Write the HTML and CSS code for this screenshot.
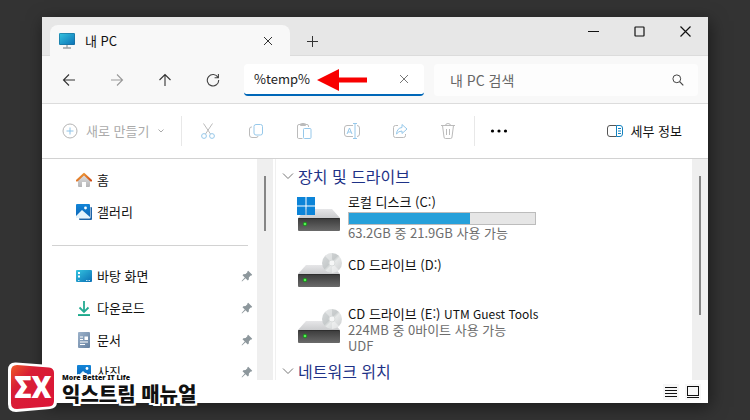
FILE: index.html
```html
<!DOCTYPE html>
<html lang="ko">
<head>
  <meta charset="UTF-8">
  <meta name="viewport" content="width=device-width, initial-scale=1.0">
  <title>내 PC</title>
  <link rel="stylesheet" href="styles.css">
</head>
<body>
<!-- shared icons -->
<svg class="defs" width="0" height="0" aria-hidden="true">
  <defs>
    <linearGradient id="screen" x1="0" y1="0" x2="1" y2="1"><stop offset="0" stop-color="#35c5e0"/><stop offset="1" stop-color="#0a6fb5"/></linearGradient>
    <linearGradient id="driveTop" x1="0" y1="0" x2="0" y2="1"><stop offset="0" stop-color="#e6e6e8"/><stop offset="1" stop-color="#cbccce"/></linearGradient>
    <linearGradient id="driveFront" x1="0" y1="0" x2="0" y2="1"><stop offset="0" stop-color="#3a3a3a"/><stop offset="1" stop-color="#6a6a6a"/></linearGradient>
    <linearGradient id="wall" x1="0" y1="0" x2="0" y2="1"><stop offset="0" stop-color="#e0e0e0"/><stop offset="1" stop-color="#b4b4b6"/></linearGradient>
    <linearGradient id="roof" x1="0" y1="0" x2="1" y2="1"><stop offset="0" stop-color="#f2a33a"/><stop offset="1" stop-color="#d0501a"/></linearGradient>
    <linearGradient id="blue" x1="0" y1="0" x2="0" y2="1"><stop offset="0" stop-color="#1285d8"/><stop offset="1" stop-color="#0c63b4"/></linearGradient>
    <linearGradient id="disc" x1="0" y1="0" x2="1" y2="1"><stop offset="0" stop-color="#d9dcdd"/><stop offset=".45" stop-color="#c6cacb"/><stop offset=".55" stop-color="#e6e8e8"/><stop offset="1" stop-color="#c9cccd"/></linearGradient>
    <linearGradient id="doc" x1="0" y1="0" x2="1" y2="1"><stop offset="0" stop-color="#9db3cb"/><stop offset="1" stop-color="#647f9f"/></linearGradient>
    <linearGradient id="down" x1="0" y1="0" x2="0" y2="1"><stop offset="0" stop-color="#3cc09a"/><stop offset="1" stop-color="#149a88"/></linearGradient>
    <linearGradient id="badge" x1="0" y1="0" x2="1" y2="1"><stop offset="0" stop-color="#f05a28"/><stop offset=".3" stop-color="#d81f35"/><stop offset="1" stop-color="#dc1438"/></linearGradient>
    <symbol id="pin" viewBox="0 0 12 12">
      <path d="M7.2.8 11.2 4.8 10.2 5.8 9.7 5.6 7.9 7.4 7.8 9.6 6.8 10.5 4.5 8.2 1 11.4.6 11 3.8 7.5 1.5 5.2 2.4 4.3 4.6 4.1 6.4 2.3 6.2 1.8z" fill="#8d979c"/>
    </symbol>
    <symbol id="drive" viewBox="0 0 46 36">
      <path d="M9 12H35L43 21H1z" fill="url(#driveTop)"/>
      <rect x="1" y="21" width="42" height="13" rx="1" fill="url(#driveFront)"/>
      <path d="M1.500 21.500H42.500" stroke="#2e2e2e"/>
      <circle cx="8" cy="27" r="2.200" fill="#1f8a1f"/>
      <circle cx="8" cy="27" r="1.300" fill="#52f052"/>
    </symbol>
    <symbol id="cd" viewBox="0 0 46 36">
      <use href="#drive" width="46" height="36"/>
      <circle cx="35" cy="10" r="10" fill="url(#disc)"/>
      <path d="M35 10 28 3A10 10 0 0 1 35 0zM35 10 42 17A10 10 0 0 1 35 20z" fill="#fff" opacity=".4"/>
      <circle cx="35" cy="10" r="3" fill="#f6f7f7" stroke="#d9dcdc"/>
    </symbol>
  </defs>
</svg>

<div class="window">
  <header class="titlebar">
    <div class="tab">
      <svg width="18" height="18" viewBox="0 0 18 18"><path d="M9 12V16M5 16H13" stroke="#9aa0a4" stroke-width="1.300"/><rect x="1" y="1" width="16" height="12" rx="1" fill="url(#screen)"/><rect x="1.500" y="1.500" width="15" height="11" rx="1" fill="none" stroke="#1c6d96" stroke-opacity=".6"/></svg>
      <span class="tab-title">내 PC</span>
      <button class="icon-button" aria-label="탭 닫기"><svg width="10" height="10"><path d="M1 1 9 9M9 1 1 9" stroke="#333"/></svg></button>
    </div>
    <button class="icon-button new-tab" aria-label="새 탭"><svg width="11" height="11"><path d="M5.500 0V11M0 5.500H11" stroke="#333"/></svg></button>
    <div class="caption-buttons">
      <button class="caption" aria-label="최소화"><svg width="11" height="11"><path d="M0 5.500H11" stroke="#111"/></svg></button>
      <button class="caption" aria-label="최대화"><svg width="11" height="11"><rect x="1" y="1" width="9" height="9" rx=".5" fill="none" stroke="#111" stroke-width="1.200"/></svg></button>
      <button class="caption" aria-label="닫기"><svg width="11" height="11"><path d="M.5.5 10.500 10.500M10.500.5.5 10.500" stroke="#111" stroke-width="1.200"/></svg></button>
    </div>
  </header>

  <nav class="navbar">
    <button class="nav-button" aria-label="뒤로"><svg width="14" height="14"><path d="M13 7H1.500M7 1.500 1.500 7 7 12.500" fill="none" stroke="#333" stroke-width="1.100"/></svg></button>
    <button class="nav-button" aria-label="앞으로" disabled><svg width="14" height="14"><path d="M1 7H12.500M7 1.500 12.500 7 7 12.500" fill="none" stroke="#999" stroke-width="1.100"/></svg></button>
    <button class="nav-button" aria-label="위로"><svg width="14" height="14"><path d="M7 13V1.500M1.500 7 7 1.500 12.500 7" fill="none" stroke="#333" stroke-width="1.100"/></svg></button>
    <button class="nav-button" aria-label="새로 고침"><svg width="14" height="14"><path d="M12 4.500A5.700 5.700 0 1 0 12.700 7M12.400 1V4.800H8.600" fill="none" stroke="#444" stroke-width="1.100"/></svg></button>
    <div class="address">
      <input class="field latin" type="text" value="%temp%" aria-label="주소">
      <button class="icon-button" aria-label="지우기"><svg width="10" height="10"><path d="M1 1 9 9M9 1 1 9" stroke="#777"/></svg></button>
      <svg class="arrow" width="50" height="22"><path d="M0 11 22 0V8.500H50V13.500H22V22z" fill="#f80000"/></svg>
    </div>
    <div class="search">
      <input class="field" type="text" placeholder="내 PC 검색" aria-label="내 PC 검색">
      <button class="icon-button" aria-label="검색"><svg width="12" height="12"><circle cx="4.800" cy="4.800" r="3.900" fill="none" stroke="#444"/><path d="M7.600 7.600 11.300 11.300" stroke="#444" stroke-width="1.200"/></svg></button>
    </div>
  </nav>

  <div class="toolbar">
    <button class="new-button" disabled>
      <svg width="16" height="16"><circle cx="8" cy="8" r="7" fill="none" stroke="#b5b5b5"/><path d="M8 4.500V11.500M4.500 8H11.500" stroke="#8fc4e8"/></svg>
      <span>새로 만들기</span>
      <svg width="8" height="6"><path d="M1.500 1.500 4 4 6.500 1.500" fill="none" stroke="#aaa"/></svg>
    </button>
    <div class="tools">
      <button class="tool" aria-label="잘라내기" disabled><svg width="16" height="16" fill="none"><path d="M3.500.5 10.500 11M12.500.5 5.500 11" stroke="#bbb"/><circle cx="4" cy="13" r="2.400" stroke="#96c8ea"/><circle cx="12" cy="13" r="2.400" stroke="#96c8ea"/></svg></button>
      <button class="tool" aria-label="복사" disabled><svg width="16" height="16" fill="none"><path d="M4 4H3.500Q1.500 4 1.500 6V12Q1.500 14.500 4 14.500H8Q10 14.500 10 13" stroke="#bbb"/><rect x="6" y="1.500" width="8.500" height="10.500" rx="2" stroke="#96c8ea"/></svg></button>
      <button class="tool" aria-label="붙여넣기" disabled><svg width="16" height="16" fill="none"><path d="M6.500 15.500H2.500Q1.500 15.500 1.500 14V3Q1.500 1.500 3 1.500H11Q12.500 1.500 12.500 3V4M4.500 1Q4.500.5 5.500.5H8.500Q9.500.5 9.500 1V2.500H4.500z" stroke="#bbb"/><rect x="7.500" y="5.500" width="7.500" height="10" rx="1" stroke="#96c8ea"/></svg></button>
      <button class="tool" aria-label="이름 바꾸기" disabled><svg width="16" height="16" fill="none"><path d="M9 13.500H3Q.5 13.500.5 11V5Q.5 2.500 3 2.500H9M13 2.500Q15.500 2.500 15.500 5V11Q15.500 13.500 13 13.500" stroke="#bbb"/><path d="M3 11 5.500 5 8 11M4 9H7M11 .5V15.500M9 .5H13M9 15.500H13" stroke="#96c8ea"/></svg></button>
      <button class="tool" aria-label="공유" disabled><svg width="16" height="16" fill="none"><path d="M6 2.500H3.500Q1.500 2.500 1.500 4.500V12.500Q1.500 14.500 3.500 14.500H11.500Q13.500 14.500 13.500 12.500V11" stroke="#bbb"/><path d="M10 1.500 15 6 10 10.500V8Q6.500 8 4.500 11 5 5 10 4.500z" stroke="#96c8ea" stroke-linejoin="round"/></svg></button>
      <button class="tool" aria-label="삭제" disabled><svg width="16" height="16" fill="none" stroke="#bbb"><path d="M1 2.500H15M5.500 2.500Q5.500.5 8 .5T10.500 2.500M2.500 2.500 4 14Q4 15.500 5.500 15.500H10.500Q12 15.500 12 14L13.500 2.500M6.500 6V12M9.500 6V12"/></svg></button>
    </div>
    <button class="more" aria-label="더 보기"><svg width="18" height="4"><circle cx="2.500" cy="2" r="1.600"/><circle cx="9" cy="2" r="1.600"/><circle cx="15.500" cy="2" r="1.600"/></svg></button>
    <button class="details">
      <svg width="16" height="12" fill="none"><path d="M9.500.5H3Q.5.5.5 3V9Q.5 11.500 3 11.500H9.500" stroke="#555"/><path d="M9.500.5H13Q15.500.5 15.500 3V9Q15.500 11.500 13 11.500H9.500zM11 3.500H14M11 6H14M11 8.500H14" stroke="#1482bf"/></svg>
      <span>세부 정보</span>
    </button>
  </div>

  <div class="content">
    <aside class="sidebar">
      <ul class="places">
        <li><svg width="16" height="16"><path d="M2 7.500 8 2.500 14 7.500V14Q14 15 13 15H10V10H6V15H3Q2 15 2 14z" fill="url(#wall)"/><path d="M1 8.500 8 2 15 8.500" fill="none" stroke="url(#roof)" stroke-width="2.200" stroke-linecap="round" stroke-linejoin="round"/></svg><span>홈</span></li>
        <li><svg width="16" height="16"><rect x="3" y="3" width="13" height="13" rx="1" fill="#1c62a6"/><rect x="0" y="0" width="14.500" height="14.500" rx="1" fill="#fff"/><rect x="0" y="0" width="14" height="14" rx="1" fill="url(#blue)"/><path d="M0 12 6 6 14 13V14H0z" fill="#e4f3fc"/><circle cx="9.500" cy="4" r="1.400" fill="#fff"/></svg><span>갤러리</span></li>
      </ul>
      <hr class="divider">
      <ul class="places">
        <li><svg width="16" height="16"><rect y="2" width="16" height="12" rx="1" fill="url(#screen)"/><path d="M2 4H4V6H2zM2 7.500H4V9.500H2z" fill="#fff"/><path d="M2 12.500H4M10 12.500H14" stroke="#bfe6f5" stroke-dasharray="1.500 1"/></svg><span>바탕 화면</span><svg class="pin" width="12" height="12"><use href="#pin"/></svg></li>
        <li><svg width="16" height="16"><path d="M8 1V12M3.500 7.500 8 12 12.500 7.500" fill="none" stroke="#24ab92" stroke-width="1.800"/><rect x="2" y="14" width="12" height="2" fill="url(#down)"/></svg><span>다운로드</span><svg class="pin" width="12" height="12"><use href="#pin"/></svg></li>
        <li><svg width="16" height="16"><rect x="2" y="0" width="12" height="16" rx="1" fill="url(#doc)"/><path d="M4 5H7M4 7.500H7M4 10H12M4 12.500H9" stroke="#fff" stroke-width="1.200"/><rect x="8.500" y="4.500" width="3.500" height="3.500" fill="#fff"/></svg><span>문서</span><svg class="pin" width="12" height="12"><use href="#pin"/></svg></li>
        <li><svg width="16" height="16"><rect x="1" y="1" width="14" height="14" rx="1" fill="url(#blue)"/><path d="M1 13 7 7 15 14V15H1z" fill="#e4f3fc"/><circle cx="11" cy="4.500" r="1.400" fill="#fff"/></svg><span>사진</span><svg class="pin" width="12" height="12"><use href="#pin"/></svg></li>
      </ul>
    </aside>
    <div class="scrollbar"><div class="thumb side-thumb"></div></div>

    <main class="drives">
      <h2 class="group"><svg width="12" height="8"><path d="M1 1.500 6 6.500 11 1.500" fill="none" stroke="#777"/></svg>장치 및 드라이브</h2>
      <div class="drive">
        <svg width="46" height="36" viewBox="0 0 46 36"><use href="#drive" width="46" height="36"/><path d="M0 0H8.500V8.500H0zM9.500 0H18V8.500H9.500zM0 9.500H8.500V18H0zM9.500 9.500H18V18H9.500z" fill="#0c84d8"/></svg>
        <div class="drive-info">
          <div>로컬 디스크 (C:)</div>
          <div class="usage"><div class="used" style="width: 65%"></div></div>
          <div class="sub">63.2GB 중 21.9GB 사용 가능</div>
        </div>
      </div>
      <div class="drive">
        <svg width="46" height="36"><use href="#cd"/></svg>
        <div class="drive-info single">
          <div>CD 드라이브 (D:)</div>
        </div>
      </div>
      <div class="drive">
        <svg width="46" height="36"><use href="#cd"/></svg>
        <div class="drive-info">
          <div>CD 드라이브 (E:) <span class="volume">UTM Guest Tools</span></div>
          <div class="sub">224MB 중 0바이트 사용 가능</div>
          <div class="sub">UDF</div>
        </div>
      </div>
      <h2 class="group"><svg width="12" height="8"><path d="M1 1.500 6 6.500 11 1.500" fill="none" stroke="#777"/></svg>네트워크 위치</h2>
    </main>
    <div class="scrollbar"><div class="thumb main-thumb"></div></div>
  </div>

  <footer class="statusbar">
    <button class="view-button" aria-label="자세히"><svg width="12" height="12"><path d="M0 1.500H12M0 4.500H12M0 7.500H12M0 10.500H12" stroke="#111"/></svg></button>
    <button class="view-button" aria-label="큰 아이콘"><svg width="12" height="12"><rect x=".5" y=".5" width="11" height="9" fill="none" stroke="#111"/><path d="M0 11.500H12" stroke="#111"/></svg></button>
  </footer>
</div>

<div class="watermark">
  <svg width="51" height="52" viewBox="0 0 51 52">
    <path d="M9 1.500 43 4Q50 5 50 11V41Q50 47 43 48L9 51Q1 51 1 43V9Q1 1 9 1.500z" fill="#fff"/>
    <path d="M10 4 42 6.500Q47 7 47 12V40Q47 45 42 45.500L10 48Q4 48 4 42V10Q4 4 10 4z" fill="url(#badge)"/>
    <text class="mark" x="7" y="37">ΣX</text>
  </svg>
  <div class="brand">
    <span class="tagline">More Better IT Life</span>
    <span class="brand-name">익스트림 매뉴얼</span>
  </div>
</div>
</body>
</html>
```
FILE: styles.css
```css
* {
  box-sizing: border-box;
}

body {
  margin: 0;
  height: 100vh;
  padding: 17px 42px;
  background-color: #333;
  color: #111;
  font-family: "Noto Sans CJK KR", sans-serif;
  font-size: 13px;
  line-height: 16px;
  overflow: hidden;
}

button {
  display: flex;
  align-items: center;
  justify-content: center;
  flex-shrink: 0;
  padding: 0;
  border: 0;
  background: none;
  color: inherit;
  font: inherit;
}

svg {
  flex-shrink: 0;
}

ul {
  list-style: none;
  margin: 0;
  padding: 0;
}

.defs {
  position: absolute;
}

.window {
  display: flex;
  flex-direction: column;
  height: 100%;
  background-color: white;
  box-shadow: 2px 4px 16px rgba(0, 0, 0, 0.5);
}

/* title bar */
.titlebar {
  display: flex;
  height: 39px;
  padding-left: 8px;
  background-color: #e7e7e7;
  border-bottom: 1px solid #dcdcdc;
}

.tab {
  display: flex;
  align-items: center;
  gap: 9px;
  width: 240px;
  height: 31px;
  margin-top: 8px;
  padding: 0 12px 0 8px;
  background-color: #f8f8f8;
  border-radius: 8px 8px 0 0;
}

.tab-title {
  flex: 1;
}

.icon-button {
  width: 20px;
  height: 20px;
}

.new-tab {
  margin: 14px 0 0 12px;
}

.caption-buttons {
  display: flex;
  margin-left: auto;
}

.caption {
  width: 46px;
  height: 28px;
}

/* navigation */
.navbar {
  display: flex;
  align-items: center;
  height: 48px;
  padding: 0 10px 0 3px;
  background-color: #f8f8f8;
  border-bottom: 1px solid #dcdcdc;
}

.nav-button {
  width: 48px;
  height: 32px;
}

.address, .search {
  display: flex;
  align-items: center;
  min-width: 0;
  height: 32px;
  border-radius: 4px;
}

.address {
  position: relative;
  flex: 0 1 180px;
  margin: 0 10px 0 7px;
  padding: 0 10px;
  background-color: white;
  border-bottom: 2px solid #0067b8;
}

.search {
  flex: 1;
  padding: 0 10px 0 16px;
  background-color: #fdfdfd;
}

.field {
  flex: 1;
  min-width: 0;
  padding: 0;
  border: 0;
  outline: 0;
  background: none;
  color: #222;
  font: inherit;
  font-size: 14px;
}

.field.latin {
  font-size: 13px;
}

.field::placeholder {
  color: #666;
}

.arrow {
  position: absolute;
  left: 73px;
  top: 5px;
}

/* toolbar */
.toolbar {
  display: flex;
  align-items: center;
  height: 55px;
  padding: 0 26px 0 20px;
  border-bottom: 1px solid #d2d2d2;
}

.new-button {
  gap: 8px;
  color: #aaa;
}

.tools {
  display: flex;
  margin-left: 16px;
  padding: 0 2px;
  border: solid #e8e8e8;
  border-width: 0 1px;
}

.tool {
  width: 48px;
  height: 30px;
}

.more {
  width: 48px;
}

.details {
  gap: 8px;
  margin-left: auto;
}

/* panes */
.content {
  display: flex;
  flex: 1;
  min-height: 0;
}

.sidebar {
  width: 215px;
  padding: 5px 4px 0 10px;
  overflow: hidden;
}

.places li {
  display: flex;
  align-items: center;
  gap: 5px;
  height: 32px;
  padding-left: 24px;
}

.divider {
  height: 1px;
  margin: 17px 5px 14px 0;
  border: 0;
  background-color: #d2d2d2;
}

.pin {
  margin-left: auto;
}

.scrollbar {
  width: 16px;
  padding: 17px 7px;
  background-color: #efefef;
}

.thumb {
  width: 2px;
  background-color: #858585;
}

.side-thumb {
  height: 55px;
}

.main-thumb {
  height: 139px;
}

.drives {
  flex: 1;
  margin-left: 2px;
  padding: 8px 6px 0;
  border-left: 1px solid #f0f0f0;
  overflow: hidden;
}

.group {
  display: flex;
  align-items: center;
  gap: 4px;
  height: 18px;
  margin: 0;
  color: #1e3287;
  font-size: 16px;
  font-weight: 400;
  line-height: 18px;
}

.drive {
  display: flex;
  gap: 5px;
  height: 56px;
  padding-left: 15px;
}

.group + .drive {
  margin-top: 9px;
}

.drive > svg {
  margin-top: 3px;
}

.single {
  padding-top: 7px;
}

.volume {
  font-size: 12px;
  line-height: 12px;
}

.usage {
  width: 188px;
  height: 13px;
  margin: 2px 0 0;
  background-color: #e6e6e6;
  border: 1px solid #bcbcbc;
}

.used {
  height: 100%;
  background-color: #26a0da;
}

.sub {
  color: #6d6d6d;
}

.statusbar {
  display: flex;
  align-items: center;
  justify-content: flex-end;
  gap: 6px;
  height: 23px;
  padding-right: 7px;
}

.view-button {
  width: 16px;
  height: 16px;
  background-color: #f7f7f7;
}

/* blog watermark over the corner of the window */
.watermark {
  position: absolute;
  left: 7px;
  bottom: 7px;
  display: flex;
  align-items: flex-end;
  gap: 4px;
}

.mark {
  fill: white;
  font-family: Roboto, sans-serif;
  font-size: 31px;
  font-weight: 900;
}

.brand {
  display: flex;
  flex-direction: column;
  padding-bottom: 7px;
  color: #111;
  text-shadow: -2px 0 white, 2px 0 white, 0 -2px white, 0 2px white, -1px -1px white, 1px -1px white, -1px 1px white, 1px 1px white, 2px 2px white, -2px 2px white;
}

.tagline {
  font-family: "Noto Sans", sans-serif;
  font-size: 7px;
  font-weight: 900;
  line-height: 8px;
}

.brand-name {
  font-size: 20px;
  font-weight: 900;
  line-height: 24px;
}
```
